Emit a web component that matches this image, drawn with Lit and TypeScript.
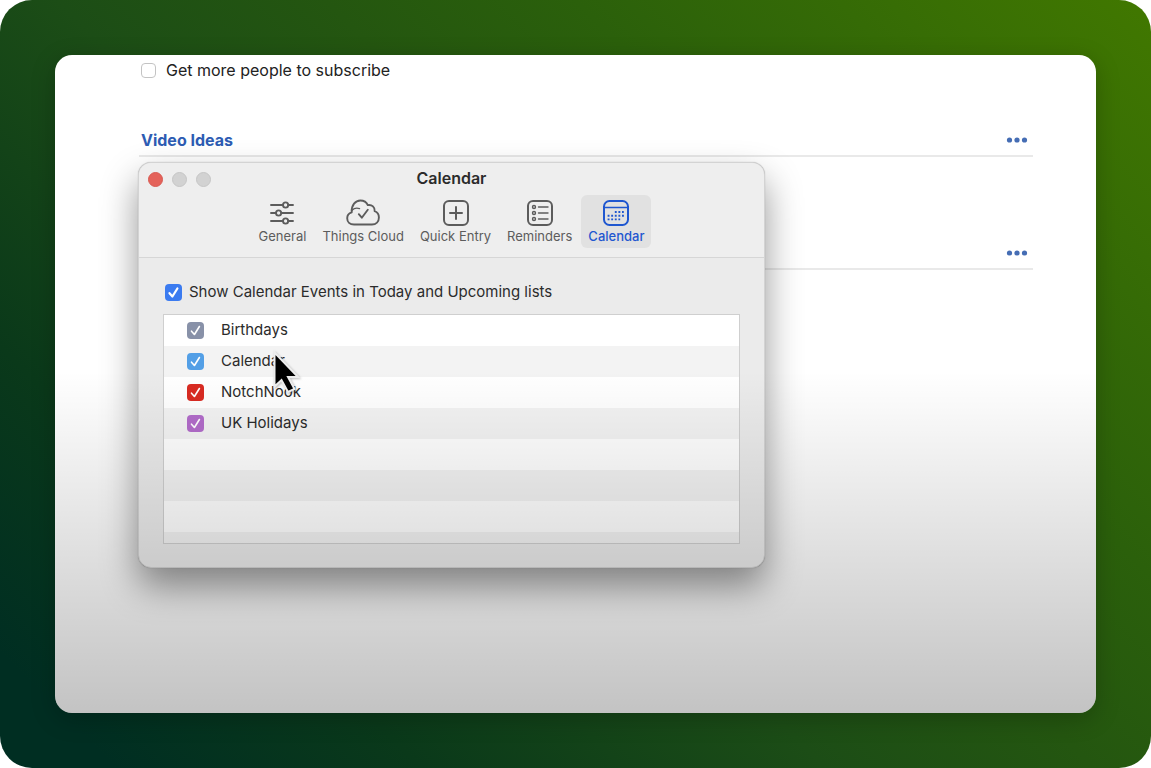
import { LitElement, html, css, svg } from "lit";
import { customElement, property, state } from "lit/decorators.js";
import { classMap } from "lit/directives/class-map.js";
import { styleMap } from "lit/directives/style-map.js";

const icons: Record<string, unknown> = {
  General: svg`<g stroke-width="1.9">
    <path d="M4 7h12M21.200 7H26M4 15h5M14.600 15H26M4 23h12M21.200 23H26" />
    <circle cx="18.600" cy="7" r="2.600" /><circle cx="11.600" cy="15" r="2.600" /><circle cx="18.600" cy="23" r="2.600" /></g>`,
  "Things Cloud": svg`<path stroke-width="1.900" d="M6 26.500C1.800 26.500-.8 23.800-.8 20.300c0-3 1.900-5.200 4.500-5.900C3.200 7 7.600 2.500 12.300 2.500c3.700 0 6.300 1.800 7.500 4.600 4.300-.7 7.200 2.200 6.900 6.100 2.600 1 4.200 3.300 4.200 6.200 0 4.200-2.900 7.100-7 7.100z" />
    <path stroke-width="1.300" d="M4 12.200c2-2 4.500-2.600 7.600-1.600" /><path stroke-width="1.900" d="M10.800 16.200l3 3.500 6-8" />`,
  "Quick Entry": svg`<rect x="3" y="3" width="24" height="24" rx="5" stroke-width="2" /><path stroke-width="2" d="M15 9v12M9 15h12" />`,
  Reminders: svg`<rect x="3" y="3" width="24" height="24" rx="5" stroke-width="2" />
    <g stroke-width="1.400"><circle cx="9" cy="9" r="1.500" /><circle cx="9" cy="15" r="1.500" /><circle cx="9" cy="21" r="1.500" />
    <path d="M13.500 9h9.500M13.500 15h9.500M13.500 21h9.500" /></g>`,
  Calendar: svg`<rect x="3" y="3" width="24" height="24" rx="5.500" stroke-width="2" /><path stroke-width="1.400" d="M3 9.500h24" />
    <path stroke-width="1.900" stroke-linecap="butt" stroke-dasharray="1.900 1.700" d="M13.800 14h9M6.600 17.700h16.300M6.600 21.400h12.600" />`,
};

@customElement("check-box")
class CheckBox extends LitElement {
  @property() label = "";
  @property() color = "#3b7bf0";
  @property({ type: Boolean }) small = false;

  static styles = css`
    :host { display: block; }
    .field { display: flex; align-items: center; gap: 7px; font-size: 15px; line-height: 22px; }
    .field.small { gap: 17px; }
    .box { display: grid; width: 17px; height: 17px; flex: none; }
    .box > * { grid-area: 1 / 1; width: 17px; height: 17px; margin: 0; }
    input { appearance: none; border-radius: 4px; background: var(--tint); }
    svg { pointer-events: none; fill: none; stroke: #fff; stroke-width: 2.200; stroke-linecap: round; stroke-linejoin: round; }
    .small svg { stroke-width: 1.600; }
    input:not(:checked) { background: #fff; border: 1px solid #bbb; }
  `;

  render() {
    return html`<label class=${classMap({ field: true, small: this.small })}>
      <span class="box">
        <input type="checkbox" checked style=${styleMap({ "--tint": this.color })} />
        <svg viewBox="0 0 17 17" aria-hidden="true"><path d="M4.500 9.200l2.900 3.300 5-8" /></svg>
      </span>
      <span>${this.label}</span>
    </label>`;
  }
}

@customElement("settings-window")
class SettingsWindow extends LitElement {
  @state() private current = "Calendar";

  private calendars = [
    { name: "Birthdays", color: "#8891a8" },
    { name: "Calendar", color: "#539fe6" },
    { name: "NotchNook", color: "#d92b22" },
    { name: "UK Holidays", color: "#b26cca" },
  ];

  static styles = css`
    :host { display: block; box-sizing: border-box; border: 1px solid #d3d3d3; border-radius: 13px; background: #ebebeb; color: #2b2b2b;
      box-shadow: 0 0 1px rgba(0, 0, 0, 0.3), 0 18px 36px rgba(0, 0, 0, 0.42); }
    header { border-bottom: 1px solid #d6d6d6; background: #eeeeee; border-radius: 12px 12px 0 0; padding-bottom: 9px; }
    .titlebar { display: grid; grid-template-columns: 1fr auto 1fr; align-items: start; height: 32px; padding: 0 9px; box-sizing: border-box; }
    h1 { margin: 0; padding-top: 4px; font-size: 16px; line-height: 22px; font-weight: 600; }
    .lights { display: flex; gap: 9px; padding-top: 9px; }
    .light { box-sizing: border-box; width: 15px; height: 15px; padding: 0; border: 1px solid #c6c6c6; border-radius: 50%; background: #d2d2d2; }
    .light.close { background: #e4625a; border-color: #d95a52; }
    nav { display: flex; justify-content: center; gap: 2px; }
    .tab { display: flex; flex-direction: column; align-items: center; height: 53px; padding: 3px 7px; border: 0; border-radius: 6px;
      background: none; color: #5c5c5c; font: 400 13px/16px Inter, "Liberation Sans", sans-serif; }
    .tab svg { width: 30px; height: 30px; overflow: visible; fill: none; stroke: currentColor; stroke-linecap: round; stroke-linejoin: round; }
    .tab.current { background: #e1e1e1; color: #1f57d0; font-weight: 500; }
    .body { padding: 23px 24px 23px; }
    .all { margin-left: 2px; }
    ul { list-style: none; margin: 11px 0 0; padding: 0; border: 1px solid #cfcfcf; }
    li { display: flex; align-items: start; box-sizing: border-box; height: 31px; padding: 4px 0 0 23px; background: #fff; }
    li:nth-child(even) { background: #f3f3f3; }
    li:last-child { height: 11px; }
  `;

  render() {
    return html`
      <header>
        <div class="titlebar">
          <div class="lights">
            <button class="light close" aria-label="Close"></button>
            <button class="light" aria-label="Minimise"></button>
            <button class="light" aria-label="Zoom"></button>
          </div>
          <h1>${this.current}</h1>
        </div>
        <nav>
          ${Object.keys(icons).map((name) => html`
            <button class=${classMap({ tab: true, current: name === this.current })} @click=${() => (this.current = name)}>
              <svg viewBox="0 0 30 30" aria-hidden="true">${icons[name]}</svg>
              <span>${name}</span>
            </button>`)}
        </nav>
      </header>
      <div class="body">
        <check-box class="all" label="Show Calendar Events in Today and Upcoming lists"></check-box>
        <ul>
          ${this.calendars.map((c) => html`<li><check-box small label=${c.name} color=${c.color}></check-box></li>`)}
          <li></li><li></li><li></li><li></li>
        </ul>
      </div>
    `;
  }
}

@customElement("app-root")
class AppRoot extends LitElement {
  static styles = css`
    :host { display: block; background: #fff; font-family: Inter, "Liberation Sans", sans-serif; }
    .backdrop { display: grid; box-sizing: border-box; min-height: 100vh; padding: 55px; border-radius: 32px;
      background: linear-gradient(45deg, #002e22 6%, #0a391a 22%, #1c4d16 43%, #245610 57%, #2b600b 70%, #417800 100%); }
    .card { position: relative; overflow: hidden; padding: 0 63px 0 84px; border-radius: 17px; background: #fff; color: #222;}
    .shade { display: grid; border-radius: 17px; box-shadow: 0 6px 24px rgba(0, 0, 0, 0.22); }
    .task { display: flex; align-items: center; gap: 10px; height: 30px; padding-left: 2px; font-size: 16px; }
    .task input { appearance: none; width: 15px; height: 15px; margin: 0; border: 1px solid #c3c3c3; border-radius: 4px; }
    .section { display: flex; justify-content: space-between; align-items: center; height: 32px; margin-top: 40px; padding: 0 5px 0 2px;
      border-bottom: 2px solid #e9e9e9; box-sizing: border-box; }
    .section + .section { margin-top: 81px; }
    h2 { margin: 0; font-size: 16px; line-height: 24px; font-weight: 700; color: #2d5cb3; }
    .more { display: flex; padding: 0; border: 0; background: none; margin-left: auto; }
    .more svg { width: 22px; height: 8px; fill: #456db4; }
    .window { position: absolute; left: 83px; top: 107px; width: 627px; }
    .cursor { position: absolute; left: 215px; top: 291px; width: 34px; height: 52px; filter: drop-shadow(1px 1px 1px rgba(0, 0, 0, 0.25)); }
    .fade { position: absolute; inset: 0; pointer-events: none; background: linear-gradient(transparent 48%, rgba(0, 0, 0, 0.235)); }
  `;

  private more() {
    return html`<button class="more" aria-label="More">
      <svg viewBox="0 0 22 8" aria-hidden="true"><circle cx="3.500" cy="4" r="2.600" /><circle cx="11" cy="4" r="2.600" /><circle cx="18.500" cy="4" r="2.600" /></svg>
    </button>`;
  }

  render() {
    return html`<div class="backdrop"><div class="shade"><main class="card">
      <label class="task"><input type="checkbox" /><span>Get more people to subscribe</span></label>
      <section class="section"><h2>Video Ideas</h2>${this.more()}</section>
      <section class="section">${this.more()}</section>
      <settings-window class="window"></settings-window>
      <div class="fade"></div>
      <svg class="cursor" viewBox="0 0 34 52" aria-hidden="true">
        <path d="M4.500 6.500v34l7-6.500 6.500 12 6.500-3-6.500-12H28z" fill="#000" stroke="#ededed" stroke-width="2" />
      </svg>
    </main></div></div>`;
  }
}
